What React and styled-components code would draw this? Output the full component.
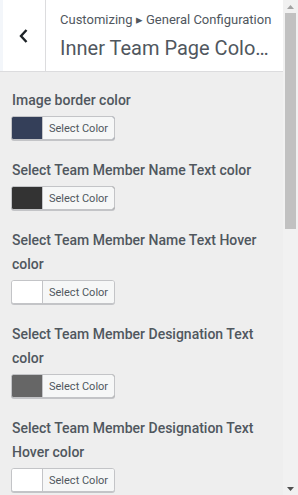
import React from "react";
import styled, { createGlobalStyle } from "styled-components";

const Global = createGlobalStyle`
  html, body { margin: 0; padding: 0; }
  body {
    background: #eeeeee;
    font-family: Roboto, "Liberation Sans", sans-serif;
    color: #50575e;
  }
`;

const Page = styled.div`
  display: flex;
  height: 100vh;
  overflow: hidden;
`;

const Panel = styled.main`
  flex: 1;
  min-width: 0;
  overflow: hidden;
`;

const Scrollbar = styled.div`
  flex: 0 0 15px;
  display: flex;
  flex-direction: column;
  align-items: center;
  background: #f1f1f1;
`;

const ArrowBox = styled.div`
  flex: 0 0 13px;
  display: flex;
  align-items: center;
  justify-content: center;
`;

const Track = styled.div`
  flex: 1;
  align-self: stretch;
  display: flex;
  flex-direction: column;
  padding: 0 2px;
`;

const Thumb = styled.div`
  background: #c1c1c1;
`;

const Header = styled.header`
  display: flex;
  height: 71px;
  background: #fff;
  border-bottom: 1px solid #dcdcde;
`;

const BackButton = styled.button`
  flex: 0 0 46px;
  display: flex;
  align-items: center;
  justify-content: center;
  background: #fff;
  border: 0;
  border-left: 3px solid #f3f6fa;
  border-right: 1px solid #dcdcde;
  padding: 0;
  margin: 0;
  cursor: pointer;
`;

const HeaderText = styled.div`
  flex: 1;
  display: flex;
  flex-direction: column;
  min-width: 0;
  padding: 11px 13px 0 14px;
`;

const Crumb = styled.span`
  font-size: 13px;
  line-height: 18px;
  white-space: nowrap;
`;

const Title = styled.h1`
  margin: 6px 0 0;
  font-size: 20px;
  font-weight: 400;
  line-height: 26px;
  white-space: nowrap;
  overflow: hidden;
  text-overflow: ellipsis;
`;

const Body = styled.div`
  display: flex;
  flex-direction: column;
  gap: 18px;
  padding: 16px 12px 24px 12px;
`;

const Control = styled.div`
  display: flex;
  flex-direction: column;
  align-items: flex-start;
  gap: 4px;
`;

const Label = styled.span`
  font-size: 14px;
  font-weight: 500;
  line-height: 24px;
`;

const ColorButton = styled.button`
  display: flex;
  align-items: stretch;
  height: 24px;
  padding: 0;
  margin: 0 0 0 -1px;
  border: 1px solid #c3c4c7;
  border-radius: 3px;
  box-shadow: 0 1px 0 #c3c4c7;
  overflow: hidden;
  background: ${(p) => p.$color};
  cursor: pointer;
`;

const Swatch = styled.span`
  width: 30px;
  background: ${(p) => p.$color};
`;

const ButtonText = styled.span`
  display: flex;
  align-items: center;
  padding: 0 6px;
  background: #f6f7f7;
  border-left: 1px solid #c3c4c7;
  font-family: Roboto, "Liberation Sans", sans-serif;
  font-size: 11px;
  color: #50575e;
`;

const controls = [
  ["Image border color", "#343f59"],
  ["Select Team Member Name Text color", "#333333"],
  ["Select Team Member Name Text Hover color", "#ffffff"],
  ["Select Team Member Designation Text color", "#666666"],
  ["Select Team Member Designation Text Hover color", "#ffffff"],
  ["Select Team Member Description Text color", "#666666"],
];

function ChevronLeft() {
  return (
    <svg width="10" height="16" viewBox="0 0 10 16" aria-hidden="true">
      <polyline points="7.5,2 2,8 7.5,14" fill="none" stroke="#1d2327" strokeWidth="2.4" />
    </svg>
  );
}

function Arrow({ up, color }) {
  return (
    <svg width="7" height="4" viewBox="0 0 7 4" aria-hidden="true">
      <polygon points={up ? "0,4 3.5,0 7,4" : "0,0 7,0 3.5,4"} fill={color} />
    </svg>
  );
}

export default function App() {
  return (
    <>
      <Global />
      <Page>
        <Panel>
          <Header>
            <BackButton aria-label="Back">
              <ChevronLeft />
            </BackButton>
            <HeaderText>
              <Crumb>Customizing ▸ General Configuration</Crumb>
              <Title>Inner Team Page Colors</Title>
            </HeaderText>
          </Header>
          <Body>
            {controls.map(([label, color]) => (
              <Control key={label}>
                <Label>{label}</Label>
                <ColorButton $color={color} type="button">
                  <Swatch $color={color} />
                  <ButtonText>Select Color</ButtonText>
                </ColorButton>
              </Control>
            ))}
          </Body>
        </Panel>
        <Scrollbar aria-hidden="true">
          <ArrowBox>
            <Arrow up color="#a3a3a3" />
          </ArrowBox>
          <Track>
            <Thumb style={{ height: 216 }} />
          </Track>
          <ArrowBox>
            <Arrow color="#505050" />
          </ArrowBox>
        </Scrollbar>
      </Page>
    </>
  );
}
